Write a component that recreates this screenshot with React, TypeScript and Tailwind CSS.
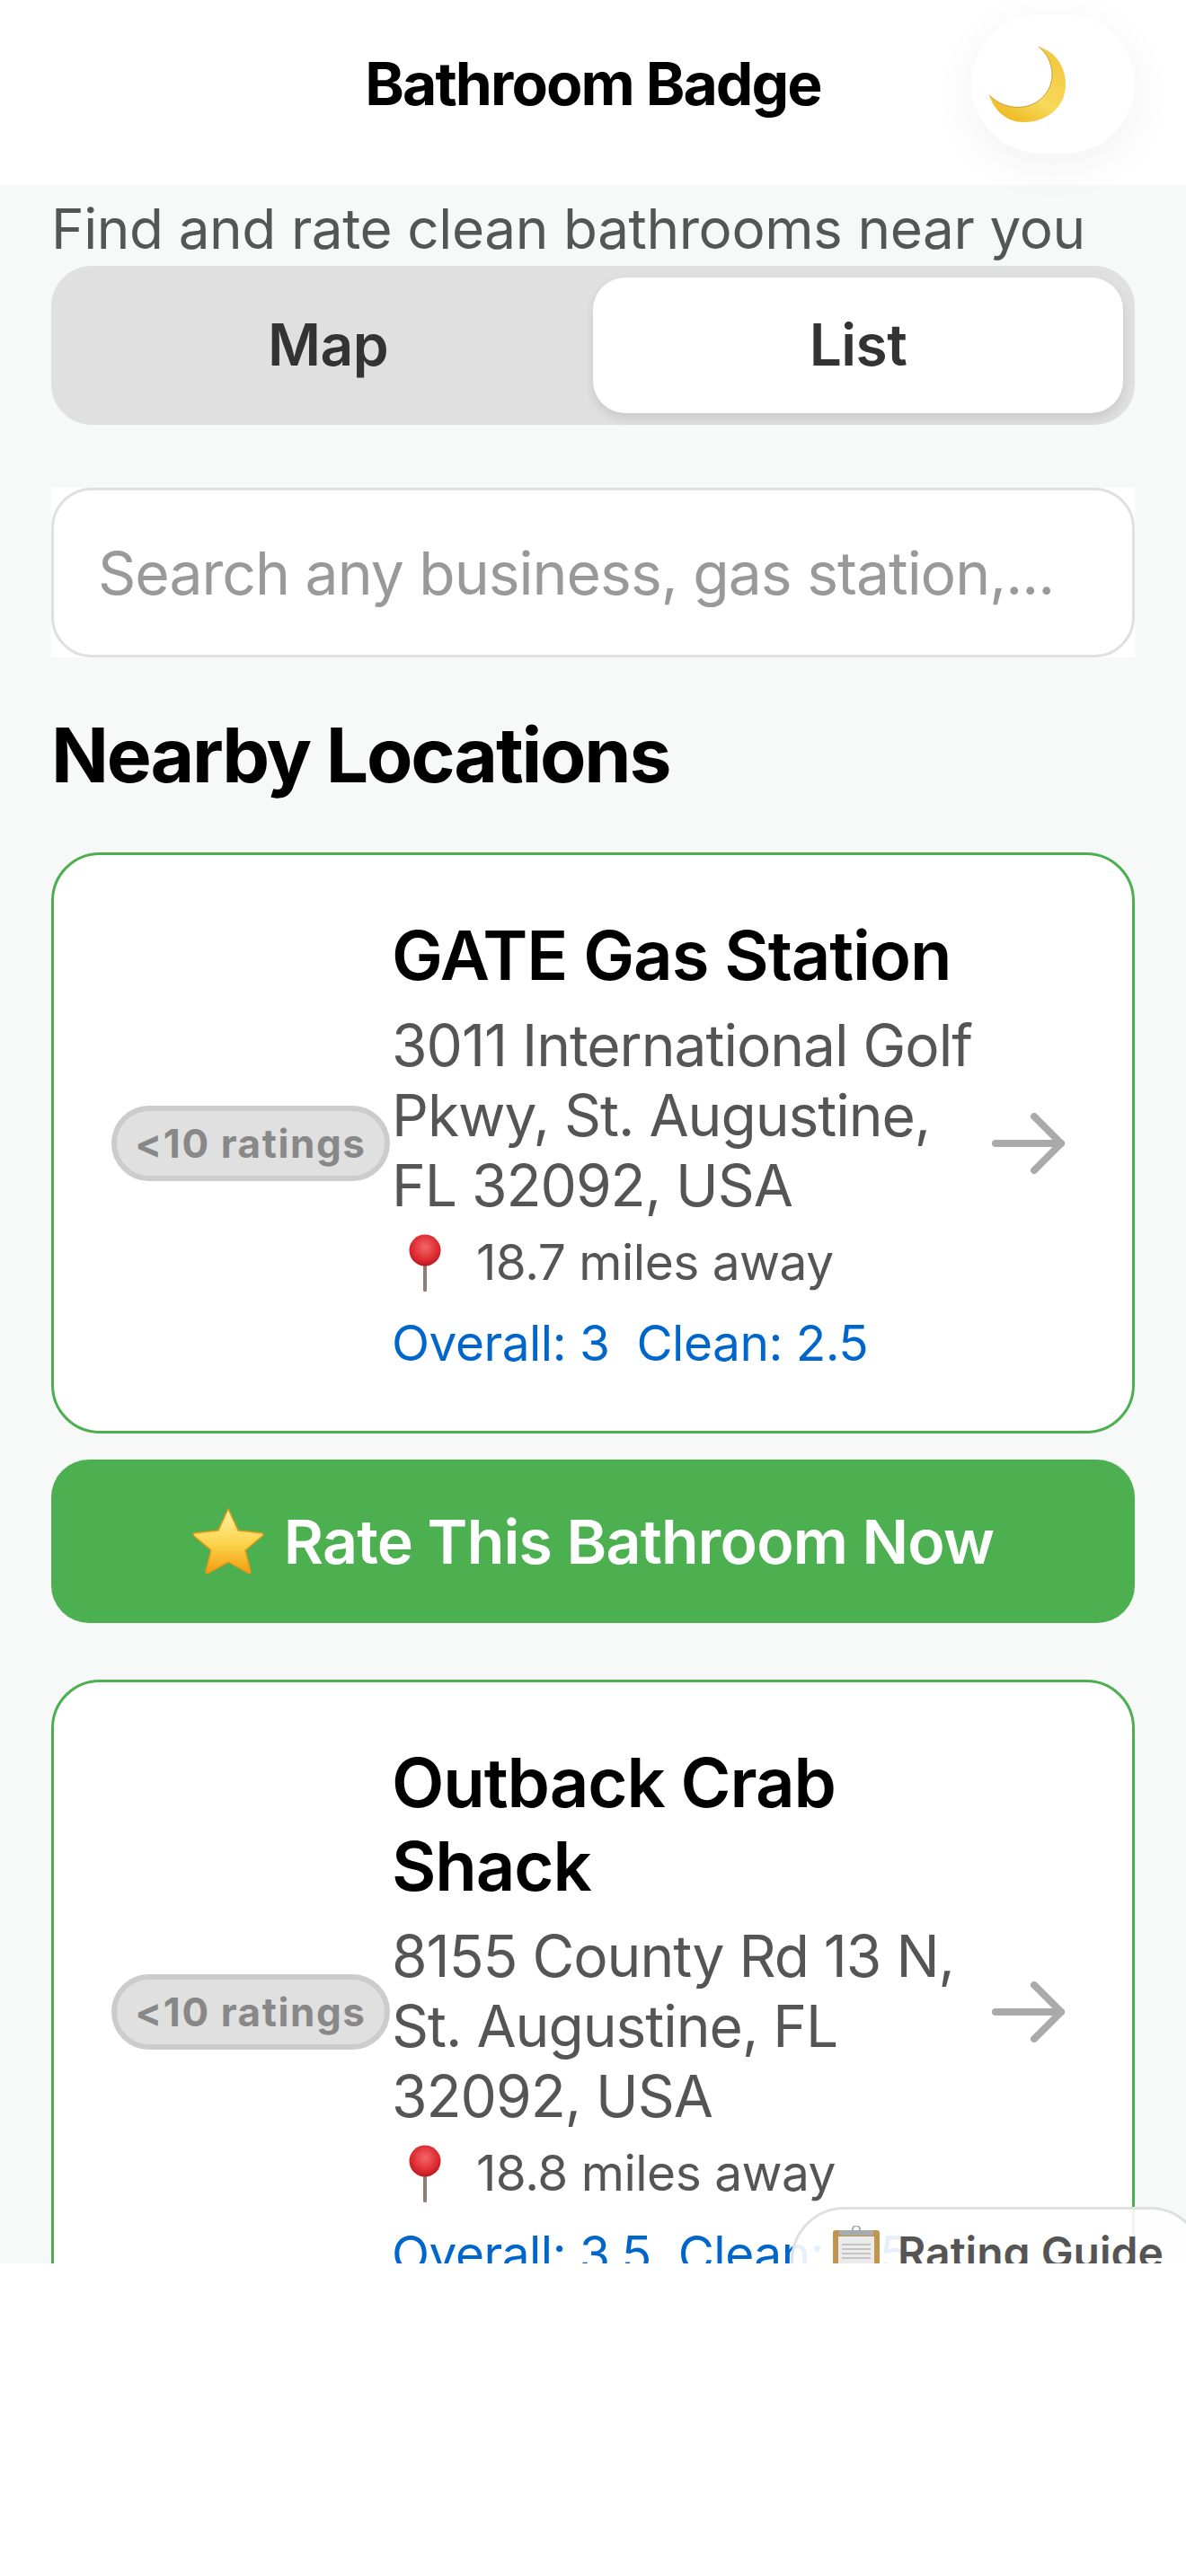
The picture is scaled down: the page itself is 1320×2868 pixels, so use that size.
function Moon() {
  return (
    <svg width="86" height="86" viewBox="0 0 86 86">
      <defs>
        <linearGradient id="moonFill" x1="0.8" y1="0.1" x2="0.3" y2="1">
          <stop offset="0" stopColor="#f3c93f" />
          <stop offset="0.6" stopColor="#f8d95a" />
          <stop offset="1" stopColor="#eeba22" />
        </linearGradient>
      </defs>
      <path
        d="M55 1 C74 7 85 23 85 43 C85 67 66 85 38 85 C20 85 6 73 0 55 C10 65 24 70 38 68 C58 65 71 48 70 30 C69 18 64 8 55 1 Z"
        fill="url(#moonFill)"
      />
      <path d="M0 55 C10 65 24 70 38 68 C58 65 71 48 70 30 C69 18 64 8 55 1" fill="none" stroke="#c9993a" strokeWidth="1" />
    </svg>
  );
}

function Star() {
  return (
    <svg width="80" height="74" viewBox="0 0 80 74">
      <defs>
        <linearGradient id="starFill" x1="0.5" y1="0" x2="0.5" y2="1">
          <stop offset="0" stopColor="#fff3a6" />
          <stop offset="0.55" stopColor="#fcd34a" />
          <stop offset="1" stopColor="#f39c12" />
        </linearGradient>
      </defs>
      <path
        d="M40 1 L51 25 L78 28 C79 28 79 30 78 31 L59 47 L65 71 C65 73 63 73 62 72 L40 60 L18 72 C17 73 15 73 15 71 L21 47 L2 31 C1 30 1 28 2 28 L29 25 Z"
        fill="url(#starFill)"
        stroke="#ea9a16"
        strokeWidth="1.5"
      />
    </svg>
  );
}

function Pin() {
  return (
    <svg width="36" height="64" viewBox="0 0 36 64">
      <defs>
        <radialGradient id="pinHead" cx="0.5" cy="0.4" r="0.6">
          <stop offset="0" stopColor="#f2686a" />
          <stop offset="0.7" stopColor="#dd2a30" />
          <stop offset="1" stopColor="#b8181f" />
        </radialGradient>
      </defs>
      <rect x="16" y="30" width="4" height="34" rx="1.5" fill="#8b7f78" />
      <circle cx="18" cy="18" r="17.5" fill="url(#pinHead)" />
    </svg>
  );
}

function Clipboard() {
  return (
    <svg width="52" height="60" viewBox="0 0 52 60">
      <rect x="0" y="5" width="52" height="55" rx="3" fill="#c2954f" />
      <rect x="6" y="12" width="40" height="48" fill="#ebebeb" />
      <rect x="10" y="20" width="32" height="2" fill="#c4c4c4" />
      <rect x="10" y="25" width="32" height="2" fill="#c4c4c4" />
      <rect x="10" y="30" width="32" height="2" fill="#c4c4c4" />
      <rect x="10" y="35" width="32" height="2" fill="#c4c4c4" />
      <rect x="7" y="5" width="38" height="6" rx="2" fill="#a7abb0" />
      <circle cx="26" cy="4" r="4" fill="none" stroke="#a7abb0" strokeWidth="2" />
    </svg>
  );
}

function Arrow() {
  return (
    <svg width="82" height="68" viewBox="0 0 82 68" fill="none" stroke="#aaaaaa" strokeWidth="8" strokeLinecap="round" strokeLinejoin="round">
      <path d="M4 34 H77" />
      <path d="M47 4 L77 34 L47 64" />
    </svg>
  );
}

interface Place {
  name: string;
  address: string;
  distance: string;
  overall: string;
  clean: string;
}

const places: Place[] = [
  {
    name: "GATE Gas Station",
    address: "3011 International Golf Pkwy, St. Augustine, FL 32092, USA",
    distance: "18.7 miles away",
    overall: "3",
    clean: "2.5",
  },
  {
    name: "Outback Crab Shack",
    address: "8155 County Rd 13 N, St. Augustine, FL 32092, USA",
    distance: "18.8 miles away",
    overall: "3.5",
    clean: "3.5",
  },
];

function PlaceCard({ place }: { place: Place }) {
  return (
    <div className="flex items-center rounded-[54px] border-[3px] border-[#4caf50] bg-white py-[65px] pr-[74px] pl-[64px]">
      <div className="flex h-[84px] w-[310px] shrink-0 items-center justify-center rounded-full border-[6px] border-[#cccccc] bg-[#e0e0e0] text-[44px] font-bold tracking-[1.6px] text-[#888888]">
        &lt;10 ratings
      </div>
      <div className="min-w-0 flex-1 pl-[2px]">
        <h3 className="text-[76px] leading-[93px] font-semibold tracking-[-1.1px] text-black">{place.name}</h3>
        <p className="mt-[15px] text-[64px] leading-[78px] tracking-[-1px] text-[#555555]">{place.address}</p>
        <div className="mt-[14px] flex items-center text-[55px] leading-[65px] tracking-[-0.5px] text-[#555555]">
          <span className="mr-[39px] ml-[19px] flex"><Pin /></span>
          {place.distance}
        </div>
        <p className="mt-[25px] text-[55px] leading-[65px] tracking-[-0.5px] whitespace-pre text-[#0066cc]">
          {`Overall: ${place.overall}  Clean: ${place.clean}`}
        </p>
      </div>
      <div className="ml-[10px] flex shrink-0"><Arrow /></div>
    </div>
  );
}

export default function App() {
  return (
    <div className="h-[2868px] w-[1320px] overflow-hidden bg-white font-['Inter',sans-serif]">
      <div className="relative h-[2520px] overflow-hidden bg-[#f7f9f9]">
        {/* Header */}
        <header className="relative flex h-[206px] items-center justify-center bg-white pb-[20px]">
          <h1 className="text-[66px] font-bold tracking-[-1.9px] text-black">Bathroom Badge</h1>
          <button className="absolute top-[16px] right-[57px] flex h-[155px] w-[182px] items-center justify-center rounded-[78px] bg-white pr-[56px] shadow-[0_12px_50px_rgba(0,0,0,0.06)]">
            <Moon />
          </button>
        </header>

        <div className="px-[57px]">
          <p className="mt-[14px] text-[62px] leading-[70px] tracking-[-0.4px] text-[#555555]">
            Find and rate clean bathrooms near you
          </p>

          {/* Map / List toggle */}
          <div className="mt-[6px] flex h-[177px] rounded-[45px] bg-[#e0e0e0] p-[13px]">
            <button className="flex-1 pb-[2px] text-[64px] font-semibold tracking-[-0.5px] text-[#333333]">Map</button>
            <button className="w-[590px] rounded-[36px] bg-white pb-[2px] text-[64px] font-semibold tracking-[-0.5px] text-[#333333] shadow-[0_6px_12px_rgba(0,0,0,0.1)]">
              List
            </button>
          </div>

          {/* Search */}
          <div className="mt-[70px] bg-white">
            <input
              readOnly
              placeholder="Search any business, gas station,..."
              className="h-[189px] w-full rounded-[45px] border-[3px] border-[#e0e0e0] bg-white px-[49px] text-[66px] tracking-[-1px] outline-none placeholder:text-[#999999]"
            />
          </div>

          <h2 className="mt-[64px] text-[84px] leading-[90px] font-bold tracking-[-2.2px] text-black">Nearby Locations</h2>

          <div className="mt-[63px]">
            <PlaceCard place={places[0]} />
            <button className="mt-[29px] flex h-[182px] w-full items-center justify-center gap-[22px] rounded-[42px] bg-[#4caf50] text-[68px] font-semibold tracking-[-0.8px] text-white">
              <Star />
              Rate This Bathroom Now
            </button>
            <div className="mt-[63px]">
              <PlaceCard place={places[1]} />
            </div>
          </div>
        </div>

        {/* Floating guide button */}
        <button className="absolute top-[2457px] left-[880px] flex h-[140px] w-[460px] items-start gap-[20px] rounded-[60px] border-[3px] border-[#e0e0e0] bg-white/90 pt-[12px] pl-[44px] text-[48px] font-semibold text-[#555555]">
          <span className="mt-[6px] flex"><Clipboard /></span>
          Rating Guide
        </button>
      </div>
    </div>
  );
}
